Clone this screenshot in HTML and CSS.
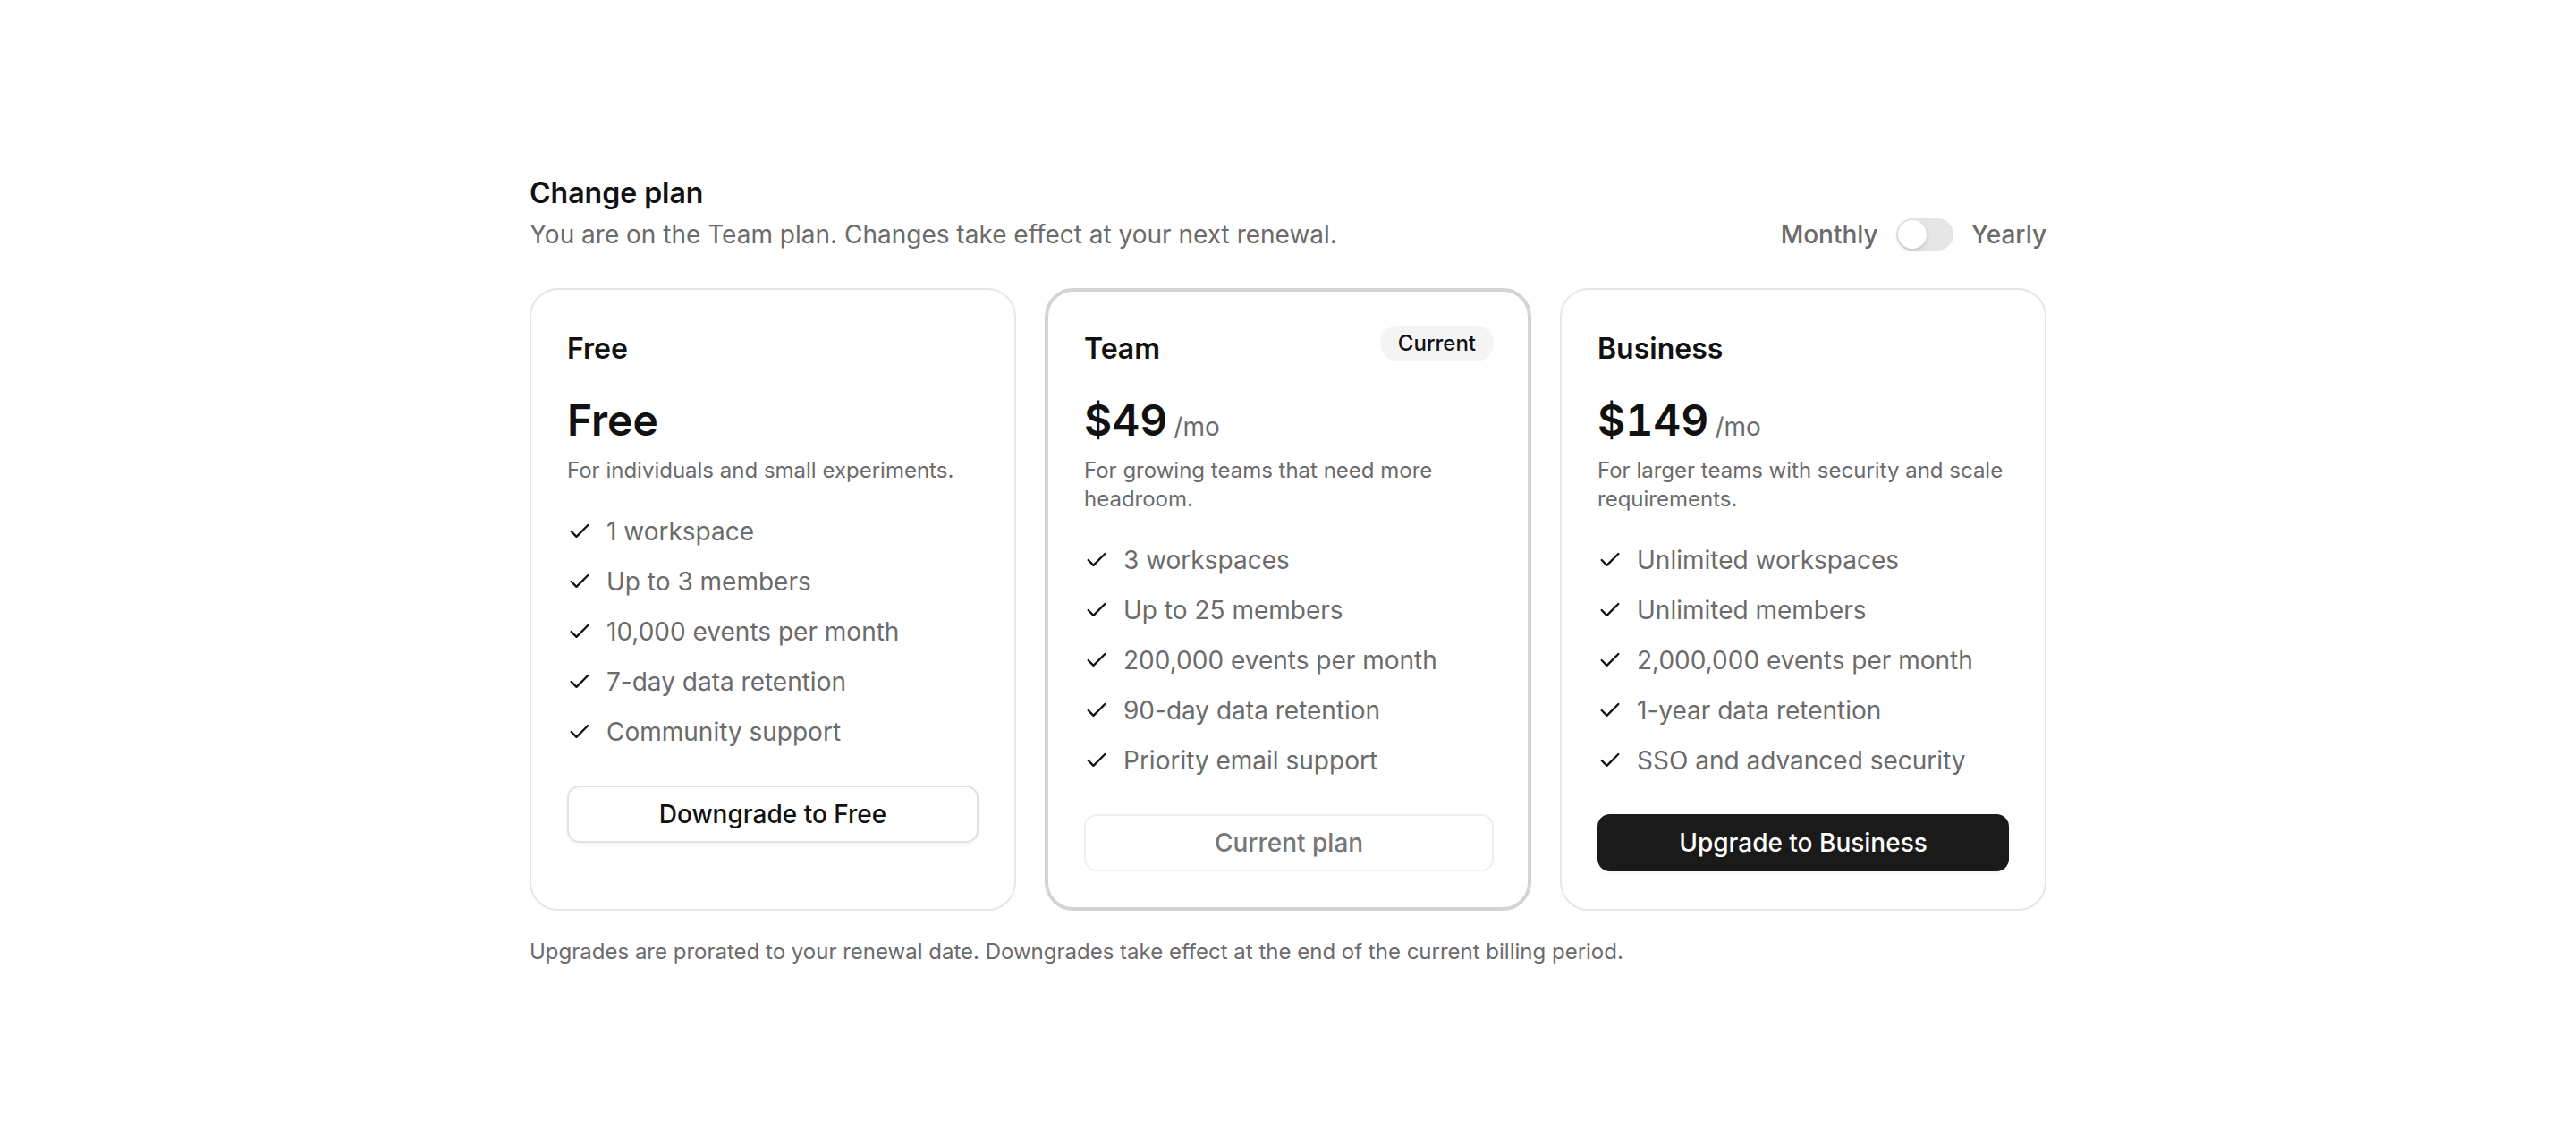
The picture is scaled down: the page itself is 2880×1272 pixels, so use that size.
FILE: index.html
```html
<!DOCTYPE html>
<html lang="en">
<head>
    <meta charset="UTF-8">
    <meta name="viewport" content="width=device-width, initial-scale=1.0">
    <title>Change plan</title>
    <link rel="stylesheet" href="styles.css">
</head>
<body>
    <div class="container">
        <div class="top">
            <div>
                <h1>Change plan</h1>
                <p class="sub">You are on the Team plan. Changes take effect at your next renewal.</p>
            </div>
            <div class="billing">
                <span>Monthly</span>
                <span class="switch"><span class="knob"></span></span>
                <span>Yearly</span>
            </div>
        </div>

        <div class="plans">
            <div class="plan">
                <div class="plan-head">
                    <div class="plan-name">Free</div>
                </div>
                <div class="price">Free</div>
                <p class="desc">For individuals and small experiments.</p>
                <ul class="features">
                    <li><svg viewBox="0 0 24 24"><polyline points="20 6 9 17 4 12"/></svg>1 workspace</li>
                    <li><svg viewBox="0 0 24 24"><polyline points="20 6 9 17 4 12"/></svg>Up to 3 members</li>
                    <li><svg viewBox="0 0 24 24"><polyline points="20 6 9 17 4 12"/></svg>10,000 events per month</li>
                    <li><svg viewBox="0 0 24 24"><polyline points="20 6 9 17 4 12"/></svg>7-day data retention</li>
                    <li><svg viewBox="0 0 24 24"><polyline points="20 6 9 17 4 12"/></svg>Community support</li>
                </ul>
                <button class="btn">Downgrade to Free</button>
            </div>

            <div class="plan current">
                <div class="plan-head">
                    <div class="plan-name">Team</div>
                    <span class="badge">Current</span>
                </div>
                <div class="price">$49<span class="per">/mo</span></div>
                <p class="desc">For growing teams that need more headroom.</p>
                <ul class="features">
                    <li><svg viewBox="0 0 24 24"><polyline points="20 6 9 17 4 12"/></svg>3 workspaces</li>
                    <li><svg viewBox="0 0 24 24"><polyline points="20 6 9 17 4 12"/></svg>Up to 25 members</li>
                    <li><svg viewBox="0 0 24 24"><polyline points="20 6 9 17 4 12"/></svg>200,000 events per month</li>
                    <li><svg viewBox="0 0 24 24"><polyline points="20 6 9 17 4 12"/></svg>90-day data retention</li>
                    <li><svg viewBox="0 0 24 24"><polyline points="20 6 9 17 4 12"/></svg>Priority email support</li>
                </ul>
                <button class="btn" disabled>Current plan</button>
            </div>

            <div class="plan">
                <div class="plan-head">
                    <div class="plan-name">Business</div>
                </div>
                <div class="price">$149<span class="per">/mo</span></div>
                <p class="desc">For larger teams with security and scale requirements.</p>
                <ul class="features">
                    <li><svg viewBox="0 0 24 24"><polyline points="20 6 9 17 4 12"/></svg>Unlimited workspaces</li>
                    <li><svg viewBox="0 0 24 24"><polyline points="20 6 9 17 4 12"/></svg>Unlimited members</li>
                    <li><svg viewBox="0 0 24 24"><polyline points="20 6 9 17 4 12"/></svg>2,000,000 events per month</li>
                    <li><svg viewBox="0 0 24 24"><polyline points="20 6 9 17 4 12"/></svg>1-year data retention</li>
                    <li><svg viewBox="0 0 24 24"><polyline points="20 6 9 17 4 12"/></svg>SSO and advanced security</li>
                </ul>
                <button class="btn primary">Upgrade to Business</button>
            </div>
        </div>

        <p class="note">Upgrades are prorated to your renewal date. Downgrades take effect at the end of the current billing period.</p>
    </div>
</body>
</html>
```

FILE: styles.css
```css
* {
    box-sizing: border-box;
}
body {
    font-family: Inter, "Liberation Sans", sans-serif;
    margin: 0;
    padding: 0;
    min-height: 100vh;
    display: flex;
    align-items: center;
    justify-content: center;
    background: #fff;
    color: #111;
}
.container {
    width: 1696px;
    margin-top: 2px;
}
.top {
    display: flex;
    justify-content: space-between;
    align-items: flex-end;
}
h1 {
    margin: 0;
    font-size: 32px;
    line-height: 48px;
    font-weight: 600;
}
.sub {
    margin: 2px 0 0;
    font-size: 28px;
    line-height: 40px;
    color: #6b6b6b;
}
.billing {
    display: flex;
    align-items: center;
    gap: 20px;
    font-size: 28px;
    line-height: 40px;
    color: #6b6b6b;
    font-weight: 500;
}
.switch {
    position: relative;
    width: 64px;
    height: 36px;
    border-radius: 18px;
    background: #e5e5e5;
}
.knob {
    position: absolute;
    left: 2px;
    top: 2px;
    width: 32px;
    height: 32px;
    border-radius: 50%;
    background: #fff;
    box-shadow: 0 2px 4px rgba(0, 0, 0, 0.15);
}
.plans {
    display: grid;
    grid-template-columns: repeat(3, 1fr);
    gap: 32px;
    margin-top: 40px;
}
.plan {
    border: 2px solid #e6e6e6;
    border-radius: 32px;
    padding: 42px 40px 40px;
    background: #fff;
}
.plan.current {
    border: 4px solid #d4d4d4;
    padding: 40px 38px 40px 40px;
}
.plan-head {
    display: flex;
    justify-content: space-between;
    align-items: flex-start;
}
.plan-name {
    font-size: 32px;
    line-height: 48px;
    font-weight: 600;
}
.badge {
    margin-top: -2px;
    font-size: 24px;
    line-height: 40px;
    padding: 0 20px;
    border-radius: 20px;
    background: #f4f4f4;
    font-weight: 500;
}
.price {
    display: flex;
    align-items: baseline;
    gap: 7px;
    height: 64px;
    margin-top: 24px;
    font-size: 48px;
    line-height: 64px;
    font-weight: 600;
    font-variant-numeric: tabular-nums;
}
.per {
    font-size: 28px;
    line-height: 1;
    font-weight: 400;
    color: #6b6b6b;
}
.desc {
    margin: 8px 0 0;
    font-size: 24px;
    line-height: 32px;
    color: #6b6b6b;
}
.features {
    list-style: none;
    margin: 32px 0 40px;
    padding: 0;
    display: flex;
    flex-direction: column;
    gap: 16px;
}
.features li {
    display: flex;
    align-items: center;
    gap: 16px;
    font-size: 28px;
    line-height: 40px;
    color: #6b6b6b;
}
.features svg {
    width: 28px;
    height: 28px;
    flex-shrink: 0;
    fill: none;
    stroke: #111;
    stroke-width: 2;
    stroke-linecap: round;
    stroke-linejoin: round;
}
.btn {
    display: block;
    width: 100%;
    height: 64px;
    font-family: inherit;
    font-size: 28px;
    font-weight: 500;
    color: #111;
    background: #fff;
    border: 2px solid #e2e2e2;
    border-radius: 14px;
    box-shadow: 0 2px 4px rgba(0, 0, 0, 0.05);
    cursor: pointer;
}
.btn:disabled {
    color: #777;
    border-color: #efefef;
    box-shadow: none;
    cursor: default;
}
.btn.primary {
    background: #1a1a1a;
    border-color: #1a1a1a;
    color: #fff;
}
.note {
    margin: 28px 0 0;
    font-size: 24px;
    line-height: 36px;
    color: #6b6b6b;
}
```
